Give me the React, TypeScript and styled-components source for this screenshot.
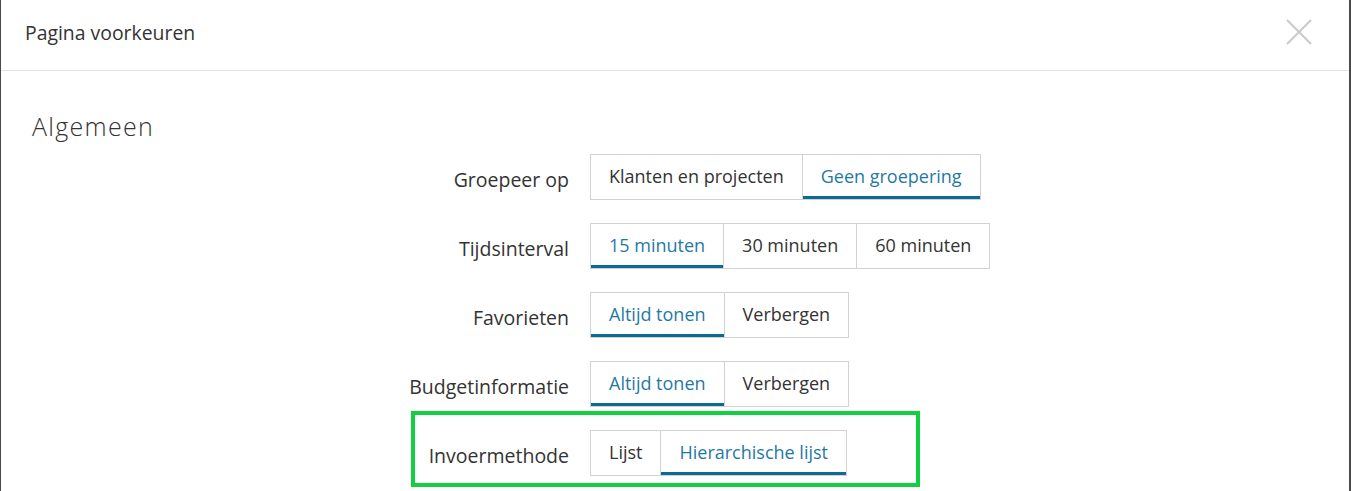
import React from "react";
import styled, { createGlobalStyle } from "styled-components";

const Global = createGlobalStyle`
  html, body { margin: 0; padding: 0; background: #4a4a4a; }
  body { font-family: "Open Sans", "Liberation Sans", sans-serif; }
  * { box-sizing: border-box; }
`;

const Modal = styled.div`
  margin: 0 2px 0 1px;
  background: #fff;
  height: 491px;
  overflow: hidden;
`;

const Header = styled.div`
  height: 71px;
  border-bottom: 1px solid #e3e3e3;
  display: flex;
  align-items: center;
  justify-content: space-between;
  padding: 0 36px 0 24px;
`;

const Title = styled.h4`
  margin: 0;
  font-size: 19.4px;
  font-weight: 400;
  color: #333;
  padding-bottom: 5px;
`;

const Close = styled.button`
  border: 0;
  background: none;
  padding: 0;
  width: 28px;
  height: 28px;
  display: flex;
  align-items: center;
  justify-content: center;
  margin-bottom: 7px;
`;

const Body = styled.div`
  padding: 40px 31px 0 31px;
`;

const Section = styled.h3`
  margin: 0 0 13px 0;
  font-family: "Open Sans", sans-serif;
  font-weight: 300;
  font-size: 25px;
  letter-spacing: 1.3px;
  color: #333;
  line-height: 30px;
`;

const Form = styled.div`
  display: grid;
  grid-template-columns: 537px auto;
  column-gap: 21px;
  row-gap: 23px;
  align-items: center;
`;

const Label = styled.div`
  text-align: right;
  font-size: 19.5px;
  color: #333;
  padding-top: 4px;
`;

const ControlCell = styled.div`
  position: relative;
  display: flex;
`;

const Group = styled.div`
  display: inline-flex;
  border: 1px solid #d2d2d2;
`;

const Option = styled.button<{ $active?: boolean }>`
  height: 44px;
  padding: 0 18px 2px;
  border: 0;
  border-left: 1px solid #d2d2d2;
  &:first-child { border-left: 0; }
  background: #fff;
  font-family: "Open Sans", sans-serif;
  font-size: 18px;
  color: ${(p) => (p.$active ? "#1f7aa3" : "#333")};
  box-shadow: ${(p) => (p.$active ? "inset 0 -3px 0 #0b6b95" : "none")};
  margin: 0;
  cursor: pointer;
`;

const Highlight = styled.div`
  position: absolute;
  left: -179px;
  top: -19px;
  width: 509px;
  height: 76px;
  border: 4px solid #10d040;
  pointer-events: none;
`;

const rows: { label: string; options: string[]; active: number; mark?: boolean }[] = [
  { label: "Groepeer op", options: ["Klanten en projecten", "Geen groepering"], active: 1 },
  { label: "Tijdsinterval", options: ["15 minuten", "30 minuten", "60 minuten"], active: 0 },
  { label: "Favorieten", options: ["Altijd tonen", "Verbergen"], active: 0 },
  { label: "Budgetinformatie", options: ["Altijd tonen", "Verbergen"], active: 0 },
  { label: "Invoermethode", options: ["Lijst", "Hierarchische lijst"], active: 1, mark: true },
];

export default function App() {
  return (
    <>
      <Global />
      <Modal>
        <Header>
          <Title>Pagina voorkeuren</Title>
          <Close aria-label="Sluiten">
            <svg width="26" height="26" viewBox="0 0 26 26">
              <path d="M1 1 L25 25 M25 1 L1 25" stroke="#c9c9c9" strokeWidth="2" fill="none" />
            </svg>
          </Close>
        </Header>
        <Body>
          <Section>Algemeen</Section>
          <Form>
            {rows.map((r) => (
              <React.Fragment key={r.label}>
                <Label>{r.label}</Label>
                <ControlCell>
                  <Group>
                    {r.options.map((o, i) => (
                      <Option key={o} $active={i === r.active}>
                        {o}
                      </Option>
                    ))}
                  </Group>
                  {r.mark && <Highlight />}
                </ControlCell>
              </React.Fragment>
            ))}
          </Form>
        </Body>
      </Modal>
    </>
  );
}
